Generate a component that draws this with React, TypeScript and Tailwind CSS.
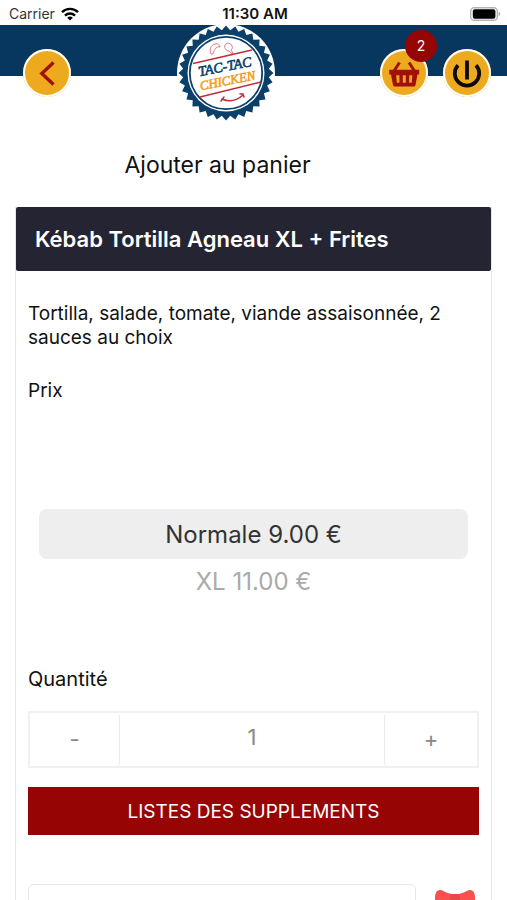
import { useState } from "react";
import type { ReactNode } from "react";

const prices = [
  { id: "normale", label: "Normale 9.00 €" },
  { id: "xl", label: "XL 11.00 €" },
];

// points of the serrated edge around the badge
const TEETH = 32;
const badgeEdge = Array.from({ length: TEETH * 2 }, (_, i) => {
  const radius = i % 2 === 0 ? 47.5 : 43;
  const angle = (Math.PI * i) / TEETH;
  const x = radius * Math.sin(angle);
  const y = -radius * Math.cos(angle);
  return `${x.toFixed(2)},${y.toFixed(2)}`;
}).join(" ");

function Logo() {
  return (
    <svg viewBox="-49 -49 98 98" className="size-[98px]" role="img" aria-label="Tac-Tac Chicken">
      <circle r="49" fill="#fff" />
      <polygon points={badgeEdge} fill="#0a4069" />
      <circle r="38.5" fill="#fff" />
      <circle r="36.2" fill="#fff" stroke="#0a4069" strokeWidth="1.8" />
      <g fill="none" stroke="#dc7880" strokeWidth="1">
        <path d="M-15 -19c-2-5 0-9 4-10 3-1 5 1 5 3-3-1-6 2-7 7z" />
        <path d="M-1 -28c2-3 6-2 7 1 1 2 0 3-1 4l2 3-1 1-3-3c-3 0-5-3-4-6z" />
      </g>
      <g stroke="#bd2d3a" strokeWidth="1.5">
        <path d="M-33 -9.5L26 -23" />
        <path d="M-26 24L35 9" />
      </g>
      <g
        transform="rotate(-11)"
        textAnchor="middle"
        strokeWidth="0.6"
        className="font-['Liberation_Serif',serif] italic"
      >
        <text x="0" y="-2" fill="#0a4069" stroke="#0a4069" className="text-[14px]">
          TAC-TAC
        </text>
        <text x="0" y="12" fill="#f0a01e" stroke="#f0a01e" className="text-[13px]">
          CHICKEN
        </text>
      </g>
      <g fill="none" stroke="#bd2d3a" strokeWidth="1.5" strokeLinecap="round">
        <path d="M-4 26Q7 31 17 22" />
        <path d="M-2 24l-3 4M14 21l3 0 1 3" />
      </g>
    </svg>
  );
}

function RoundButton({ label, children }: { label: string; children: ReactNode }) {
  return (
    <button
      type="button"
      aria-label={label}
      className="relative size-12 rounded-full bg-[#eeaa1e] ring-2 ring-inset ring-white"
    >
      {children}
    </button>
  );
}

function StatusBar() {
  return (
    <div className="grid h-[25px] grid-cols-3 items-center pt-[2px] pr-[6px] pl-[9px] text-sm leading-5">
      <div className="flex items-center gap-[6px] text-[#333]">
        <span>Carrier</span>
        <svg viewBox="0 0 18 14" className="h-[14px] w-[18px]" fill="none" stroke="#000" strokeWidth="2.4">
          <path d="M1 5.2a11.4 11.4 0 0 1 16 0" />
          <path d="M4 8.6a7.1 7.1 0 0 1 10 0" />
          <path d="M9 13.6L6.2 10.8a4 4 0 0 1 5.6 0z" fill="#000" stroke="none" />
        </svg>
      </div>
      <span className="text-center text-[15px] font-semibold">11:30 AM</span>
      <svg viewBox="0 0 31 14" className="h-[14px] w-[31px] justify-self-end">
        <rect x="0.7" y="0.7" width="26.6" height="12.6" rx="3.5" fill="#fff" stroke="#b4b4b4" strokeWidth="1.4" />
        <rect x="2.8" y="2.3" width="22.6" height="9.4" rx="2" fill="#000" />
        <path d="M28.6 4.8c2 .6 2 3.8 0 4.4z" fill="#a8a8a8" />
      </svg>
    </div>
  );
}

function Header() {
  return (
    <header className="flex h-24 items-center justify-between bg-[linear-gradient(#07375f_51px,transparent_51px)] pr-4 pl-[23px]">
      <RoundButton label="Retour">
        <svg viewBox="0 0 48 48" fill="none" stroke="#a01008" strokeWidth="3.4">
          <path d="M30.5 13.5L18.8 24.5L30.5 35.5" />
        </svg>
      </RoundButton>
      <Logo />
      <div className="flex gap-[15px]">
        <RoundButton label="Panier">
          <svg viewBox="0 0 48 48">
            <path d="M14 22L19.5 13.5M34.5 22L29 13.5" stroke="#a01008" strokeWidth="3" />
            <path
              fillRule="evenodd"
              fill="#a01008"
              d="M9.2 20.8h30v4.6h-1.7l-2 10.6q-.3 1.6-1.9 1.6H14.900q-1.6 0-1.9-1.6l-2-10.6H9.200zM16.200 26.200l.7 7.500h2.500v-7.500zM22.800 26.200v7.500h3V26.200zM29.200 26.200v7.500h2.500l.7-7.500z"
            />
          </svg>
          <span className="absolute -top-[19px] left-[25px] flex size-8 items-center justify-center rounded-full bg-[#970404] text-sm text-white">
            2
          </span>
        </RoundButton>
        <RoundButton label="Déconnexion">
          <svg viewBox="0 0 48 48" fill="none" stroke="#0d0a05" strokeWidth="3.8">
            <path d="M24 11.5V30.5" />
            <path d="M15 16.2a12.2 12.2 0 1 0 18 0" />
          </svg>
        </RoundButton>
      </div>
    </header>
  );
}

export default function App() {
  const [price, setPrice] = useState("normale");
  const [quantity, setQuantity] = useState(1);

  return (
    <div className="min-h-screen bg-white font-[Inter,'Liberation_Sans',sans-serif] text-[#111]">
      <StatusBar />
      <Header />

      <h1 className="pt-7 pr-[72px] text-center text-[23px] leading-8">Ajouter au panier</h1>

      <main className="mx-[15px] mt-[26px] border-x border-[#e6e6e6]">
        <h2 className="rounded-xs bg-[#252432] px-[19px] py-4 text-[22px] leading-8 font-semibold text-white">
          Kébab Tortilla Agneau XL + Frites
        </h2>

        <div className="px-3 pt-[31px] pb-6">
          <p className="text-[19px] leading-6">
            Tortilla, salade, tomate, viande assaisonnée, 2 sauces au choix
          </p>

          <fieldset>
            <legend className="pt-[29px] text-[19px] leading-6">Prix</legend>
            <div className="px-[11px] pt-[106px] pb-[62px]">
              {prices.map((item) => (
                <label
                  key={item.id}
                  className={
                    item.id === price
                      ? "block rounded-lg bg-[#eee] pt-[10px] pb-2 text-center text-2xl leading-8 text-[#333]"
                      : "block py-[7px] text-center text-2xl leading-8 text-[#aaa]"
                  }
                >
                  <input
                    type="radio"
                    name="price"
                    value={item.id}
                    checked={item.id === price}
                    onChange={() => setPrice(item.id)}
                    className="sr-only"
                  />
                  {item.label}
                </label>
              ))}
            </div>
          </fieldset>

          <label htmlFor="quantity" className="block text-[20px] leading-6">
            Quantité
          </label>
          <div className="mt-5 flex h-[57px] border-2 border-[#f0f0f0] text-[22px] text-[#888]">
            <button
              type="button"
              aria-label="Diminuer"
              onClick={() => setQuantity(Math.max(1, quantity - 1))}
              className="w-[90px] rounded-r-sm border-r border-[#ebebeb]"
            >
              -
            </button>
            <input
              id="quantity"
              type="text"
              inputMode="numeric"
              value={quantity}
              onChange={(e) => setQuantity(Number(e.target.value) || 1)}
              className="min-w-0 flex-1 pb-1 text-center"
            />
            <button
              type="button"
              aria-label="Augmenter"
              onClick={() => setQuantity(quantity + 1)}
              className="w-[93px] rounded-l-sm border-l border-[#ebebeb]"
            >
              +
            </button>
          </div>

          <button
            type="button"
            className="mt-[19px] h-12 w-full bg-[#970404] pt-[2px] text-[19px] text-white"
          >
            LISTES DES SUPPLEMENTS
          </button>

          <div className="mt-[49px] flex items-start gap-[19px]">
            <input
              type="text"
              aria-label="Code cadeau"
              className="h-12 min-w-0 flex-1 rounded-md border border-[#e6e6e6] px-3"
            />
            <button type="button" aria-label="Cadeau" className="mt-[5px] mr-1">
              <svg viewBox="0 0 40 40" className="size-10">
                <path
                  d="M0 7Q1 0 6 1c4 2 7 3 10 4h8c3-1 6-2 10-4q5-1 6 6v7q-1 4-5 3l-11-4h-8l-11 4q-4 1-5-3z"
                  fill="#fa5050"
                />
                <path d="M15 5h10v9H15z" fill="#e94848" />
                <path d="M4 18h32v20H4z" fill="#fa5050" />
                <path d="M17 18h6v20h-6z" fill="#ffd05c" />
              </svg>
            </button>
          </div>
        </div>
      </main>
    </div>
  );
}
